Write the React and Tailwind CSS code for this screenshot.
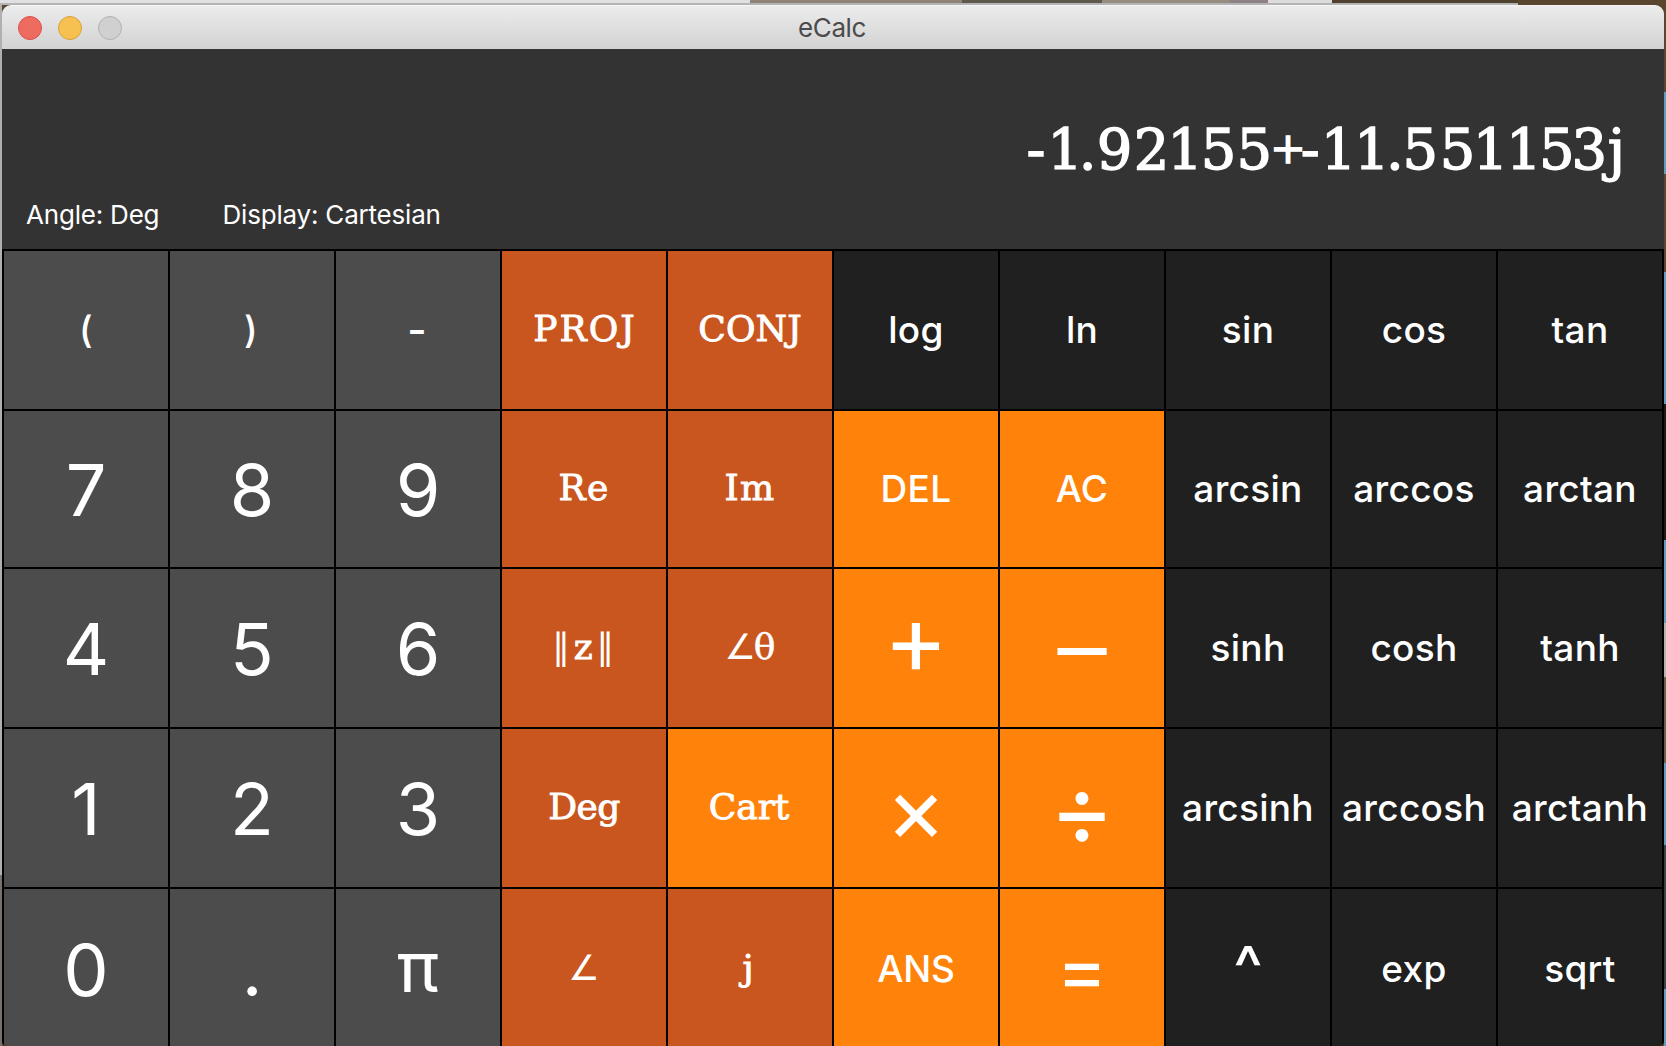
import React from "react";

const GRAY = "bg-[#4c4c4c]";
const RUST = "bg-[#c9561e]";
const ORANGE = "bg-[#ff820a]";
const BLACK = "bg-[#202020]";

const DIGIT = "text-[72px] translate-y-[1px]";
const WORD = "text-[37px] font-[460] tracking-[0.3px] translate-y-[-1px]";
const SERIF = "font-['DejaVu_Serif',serif] text-[36px] [-webkit-text-stroke:0.9px_white] translate-y-[-1px]";
const ANGLE = "font-['DejaVu_Sans',sans-serif] text-[35px] translate-y-[-1px]";

const KEYS = [
  ["(", GRAY, WORD],
  [")", GRAY, WORD + " relative left-[-1px]"],
  ["-", GRAY, "text-[42px] font-medium relative left-[-1px]"],
  ["PROJ", RUST, SERIF + " tracking-[2.1px] pl-[2px]"],
  ["CONJ", RUST, SERIF + " tracking-[0.1px]"],
  ["log", BLACK, WORD],
  ["ln", BLACK, WORD],
  ["sin", BLACK, WORD],
  ["cos", BLACK, WORD],
  ["tan", BLACK, WORD],

  ["7", GRAY, DIGIT],
  ["8", GRAY, DIGIT],
  ["9", GRAY, DIGIT],
  ["Re", RUST, SERIF + " tracking-[1.4px]"],
  ["Im", RUST, SERIF + " tracking-[1.4px]"],
  ["DEL", ORANGE, WORD],
  ["AC", ORANGE, WORD],
  ["arcsin", BLACK, WORD],
  ["arccos", BLACK, WORD],
  ["arctan", BLACK, WORD],

  ["4", GRAY, DIGIT],
  ["5", GRAY, DIGIT],
  ["6", GRAY, DIGIT],
  [
    <>
      <span className="[-webkit-text-stroke:0px]">‖</span>z
      <span className="[-webkit-text-stroke:0px]">‖</span>
    </>,
    RUST,
    SERIF + " tracking-[3.6px] pl-[2px]",
  ],
  [
    <>
      <span className="font-['DejaVu_Sans',sans-serif] text-[35px] tracking-[-2px] [-webkit-text-stroke:0px]">∠</span>θ
    </>,
    RUST,
    "font-['DejaVu_Serif',serif] text-[36px] [-webkit-text-stroke:0.5px_white] translate-y-[-1px]",
  ],
  ["+", ORANGE, "text-[98px] translate-y-[-9px]"],
  ["−", ORANGE, "text-[111px] font-light translate-y-[-6px]"],
  ["sinh", BLACK, WORD],
  ["cosh", BLACK, WORD],
  ["tanh", BLACK, WORD],

  ["1", GRAY, DIGIT],
  ["2", GRAY, DIGIT],
  ["3", GRAY, DIGIT],
  ["Deg", RUST, SERIF + " tracking-[-0.6px]"],
  ["Cart", ORANGE, SERIF + " relative left-[-1px]"],
  ["×", ORANGE, "text-[92px] translate-y-[1px]"],
  ["÷", ORANGE, "text-[99px] translate-y-[1px]"],
  ["arcsinh", BLACK, WORD],
  ["arccosh", BLACK, WORD],
  ["arctanh", BLACK, WORD],

  ["0", GRAY, DIGIT],
  [".", GRAY, DIGIT],
  ["π", GRAY, "text-[70px] translate-y-[-2px]"],
  ["∠", RUST, ANGLE],
  ["j", RUST, SERIF + " relative left-[-2px]"],
  ["ANS", ORANGE, "text-[37px] font-[460] tracking-[-0.2px] translate-y-[-1px]"],
  ["=", ORANGE, "text-[77px] translate-y-[0px]"],
  ["^", BLACK, "text-[62px] font-medium translate-y-[-1px]"],
  ["exp", BLACK, WORD],
  ["sqrt", BLACK, WORD],
];

/* Typewriter-like uneven advances for the result line. */
const RESULT = [
  ["-", "tracking-[1.9px]"],
  ["1", "tracking-[-4.2px]"],
  [".", "tracking-[0.2px]"],
  ["9", "tracking-[1.4px]"],
  ["2", "tracking-[-2px]"],
  ["1", "tracking-[-2.2px]"],
  ["5", "tracking-[0px]"],
  ["5", "tracking-[-2.1px]"],
  ["+", "tracking-[-5.2px] text-[43px] relative top-[-6px]"],
  ["-", "tracking-[0.9px]"],
  ["1", "tracking-[-2.2px]"],
  ["1", "tracking-[-3.6px]"],
  [".", "tracking-[-1.3px]"],
  ["5", "tracking-[1.4px]"],
  ["5", "tracking-[-2.5px]"],
  ["1", "tracking-[-2.5px]"],
  ["1", "tracking-[-2.6px]"],
  ["5", "tracking-[-3px]"],
  ["3", "tracking-[0.4px]"],
  ["j", "tracking-[0px]"],
];

function DesktopTop() {
  return (
    <div className="flex h-[5px] w-full shrink-0 overflow-hidden">
      <div className="h-full w-[750px] border-b-2 border-[#b4b4b4] bg-[#dfe0df]" />
      <div className="h-full w-[212px] border-b-2 border-[#b4b4b4] bg-[#8f8378]" />
      <div className="h-full w-[140px] border-b-2 border-[#b4b4b4] bg-[#5f584d]" />
      <div className="h-full w-[128px] border-b-2 border-[#b4b4b4] bg-[#958d80]" />
      <div className="h-full w-[38px] border-b-2 border-[#b4b4b4] bg-[#8d8086]" />
      <div className="h-full w-[64px] border-b-2 border-[#b4b4b4] bg-[#dcdcdc]" />
      <div className="h-full w-[186px] border-b-2 border-[#b4b4b4] bg-[#4f412e]" />
      <div className="h-full flex-1 bg-[#5a452e]" />
    </div>
  );
}

function DesktopRight() {
  return (
    <div className="flex w-[2px] shrink-0 flex-col">
      <div className="h-[87px] bg-[#5a452e]" />
      <div className="h-[82px] bg-[#5f9cbd]" />
      <div className="h-[98px] bg-[#5a452e]" />
      <div className="h-[132px] bg-[#5f9cbd]" />
      <div className="h-[136px] bg-[#1c1a12]" />
      <div className="h-[83px] bg-[#5f9cbd]" />
      <div className="h-[54px] bg-[#b4b2ae]" />
      <div className="h-[86px] bg-[#6a5f48]" />
      <div className="h-[82px] bg-[#5f9cbd]" />
      <div className="h-[144px] bg-[#3e4246]" />
      <div className="flex-1 bg-[#5f9cbd]" />
    </div>
  );
}

export default function App() {
  return (
    <div className="flex h-[1046px] w-[1666px] flex-col overflow-hidden bg-[#5a452e] font-['Inter',sans-serif]">
      <DesktopTop />
      <div className="flex min-h-0 flex-1">
        <div className="flex w-[2px] shrink-0 flex-col">
          <div className="h-[870px] bg-[#b0b0b0]" />
          <div className="flex-1 bg-[#78706a]" />
        </div>
        <div className="flex w-[1662px] shrink-0 flex-col overflow-hidden rounded-t-[9px] rounded-b-[5px]">
          <header className="grid h-[44px] shrink-0 grid-cols-[1fr_auto_1fr] items-center border-t border-[#f6f6f6] bg-gradient-to-b from-[#ececec] to-[#d2d2d2]">
            <div className="flex gap-[16px] pl-[16px]">
              <span className="size-[24px] rounded-full border border-[#d9524a] bg-[#ee6b60]" />
              <span className="size-[24px] rounded-full border border-[#d99f3c] bg-[#f6c150]" />
              <span className="size-[24px] rounded-full border border-[#b1b1b1] bg-[#d0d0d0]" />
            </div>
            <h1 className="translate-x-[-1px] text-[26px] leading-none tracking-[-0.4px] text-[#4b4b4b]">eCalc</h1>
          </header>

          <section className="flex h-[200px] shrink-0 flex-col bg-[#333333] text-white">
            <div className="mt-[73px] flex h-[56px] items-baseline justify-end whitespace-pre pr-[39px] font-['DejaVu_Serif',serif] text-[56px] leading-[56px] [-webkit-text-stroke:1.4px_white]">
              <div>
                {RESULT.map(([ch, cls], i) => (
                  <span key={i} className={cls}>
                    {ch}
                  </span>
                ))}
              </div>
            </div>
            <div className="mt-[24px] flex pl-[24px] text-[26px] font-[430] leading-[26px] tracking-[-0.2px]">
              <span className="w-[196.5px]">Angle: Deg</span>
              <span>Display: Cartesian</span>
            </div>
          </section>

          <main className="grid shrink-0 grid-cols-[repeat(10,164px)] grid-rows-[158px_156px_158px_158px_160px] gap-[2px] bg-black p-[2px]">
            {KEYS.map(([label, bg, cls], i) => (
              <button key={i} className={"flex items-center justify-center overflow-hidden whitespace-nowrap text-white " + bg}>
                <span className={"leading-none " + cls}>{label}</span>
              </button>
            ))}
          </main>
        </div>
        <DesktopRight />
      </div>
    </div>
  );
}
